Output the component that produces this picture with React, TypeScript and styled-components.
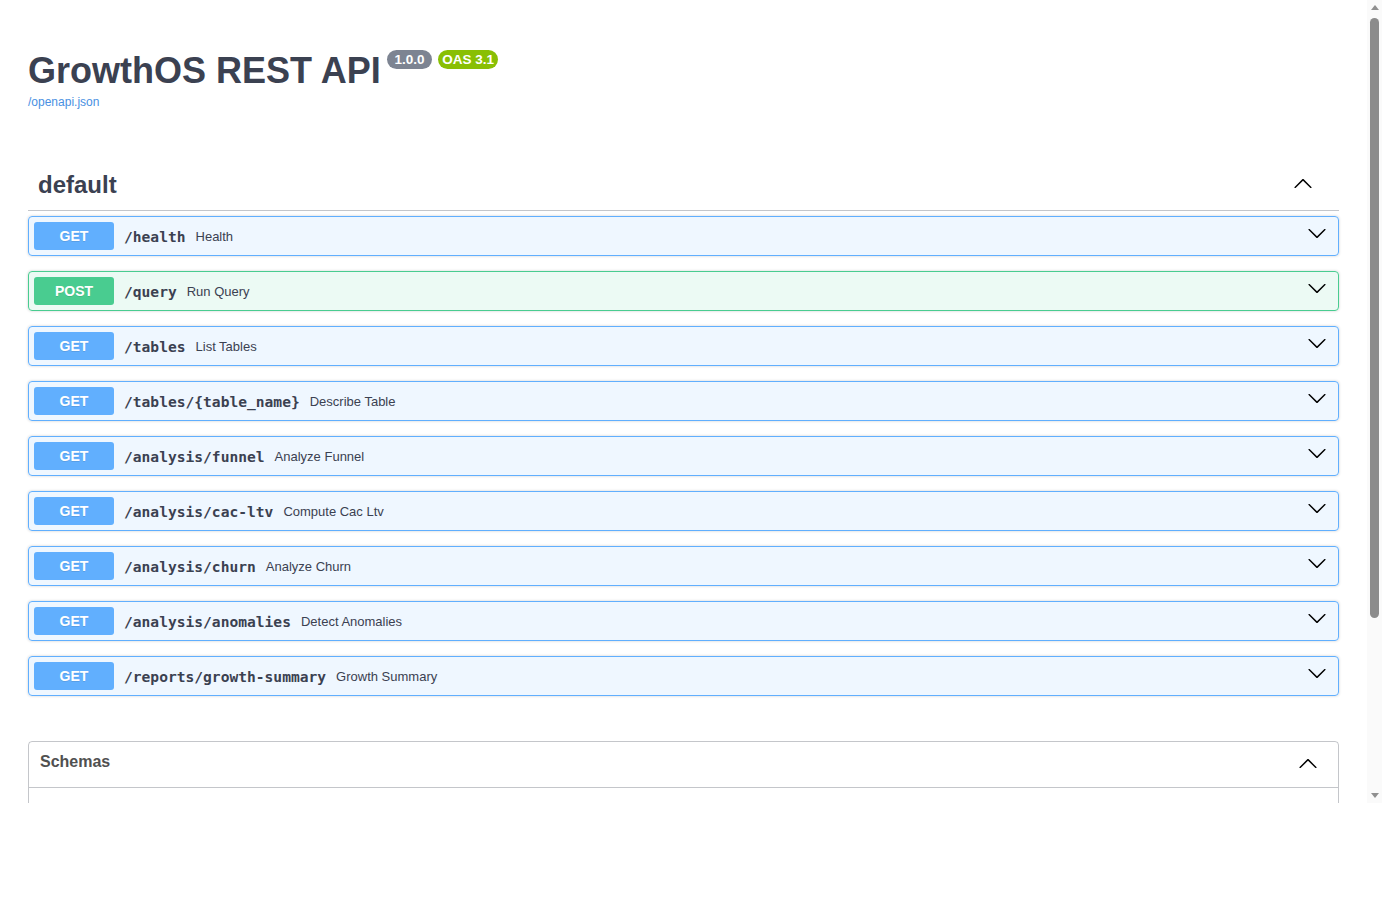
import { FunctionComponent } from 'react';
import styled, { createGlobalStyle } from 'styled-components';

const GlobalStyle = createGlobalStyle`
  html, body {
    margin: 0;
    padding: 0;
    background: #fff;
  }
  body {
    font-family: "Liberation Sans", Arial, sans-serif;
    color: #3b4151;
  }
`;

const Viewport = styled.div`
  display: flex;
  width: 1382px;
  height: 803px;
  background: #fff;
`;

const Page = styled.div`
  flex: 1;
  height: 100%;
  overflow: hidden;
`;

const ScrollTrack = styled.div`
  display: flex;
  flex-direction: column;
  align-items: center;
  width: 15px;
  height: 100%;
  background: #fafafa;
`;

const ScrollButton = styled.div`
  display: flex;
  align-items: center;
  justify-content: center;
  width: 15px;
  height: 15px;
  flex: none;
`;

const Triangle = styled.span<{ $up?: boolean }>`
  width: 0;
  height: 0;
  border-left: 4.5px solid transparent;
  border-right: 4.5px solid transparent;
  ${(p) => (p.$up ? 'border-bottom: 5px solid #8f8f8f;' : 'border-top: 5px solid #8f8f8f;')}
`;

const ScrollThumb = styled.div`
  width: 9px;
  height: 600px;
  margin-top: 3px;
  border-radius: 5px;
  background: #8c8c8c;
  flex: none;
`;

const ScrollSpacer = styled.div`
  flex: 1;
`;

const Wrapper = styled.div`
  padding: 50px 28px 38px;
`;

const Info = styled.div`
  margin: 0 0 50px;
`;

const Title = styled.h2`
  margin: 0 0 3px;
  font-size: 36px;
  font-weight: 700;
  line-height: 42px;
  color: #3b4151;
  display: flex;
  align-items: flex-start;
`;

const Badge = styled.small<{ $bg: string }>`
  display: inline-block;
  margin: 0 0 0 6px;
  padding: 2px 4px;
  border-radius: 57px;
  background: ${(p) => p.$bg};
  color: #fff;
  font-size: 13.5px;
  font-weight: 700;
  line-height: 15px;
  white-space: pre;
`;

const SpecLink = styled.a`
  display: block;
  font-size: 12px;
  line-height: 14px;
  color: #4990e2;
  text-decoration: none;
`;

const TagSection = styled.div`
  margin-bottom: 45px;
`;

const TagHeader = styled.h3`
  margin: 0 0 5px;
  padding: 12px 20px 11px 10px;
  display: flex;
  align-items: center;
  justify-content: space-between;
  border-bottom: 1px solid rgba(59, 65, 81, 0.3);
  font-size: 24px;
  font-weight: 700;
  line-height: 28px;
  color: #3b4151;
`;

const methodColors = {
  GET: { main: '#61affe', bg: 'rgba(97, 175, 254, 0.1)' },
  POST: { main: '#49cc90', bg: 'rgba(73, 204, 144, 0.1)' },
};

type Method = keyof typeof methodColors;

const OpBlock = styled.div<{ $method: Method }>`
  margin: 0 0 15px;
  border: 1px solid ${(p) => methodColors[p.$method].main};
  border-radius: 4px;
  background: ${(p) => methodColors[p.$method].bg};
  box-shadow: 0 0 3px rgba(0, 0, 0, 0.19);
  &:last-child {
    margin-bottom: 0;
  }
`;

const Summary = styled.div`
  display: flex;
  align-items: center;
  padding: 5px;
  height: 28px;
`;

const MethodLabel = styled.span<{ $method: Method }>`
  min-width: 80px;
  padding: 6px 0;
  border-radius: 3px;
  background: ${(p) => methodColors[p.$method].main};
  color: #fff;
  font-size: 14px;
  font-weight: 700;
  line-height: 16px;
  text-align: center;
  text-shadow: 0 1px 0 rgba(0, 0, 0, 0.1);
`;

const Path = styled.span`
  padding: 0 10px;
  font-family: "DejaVu Sans Mono", monospace;
  font-size: 14.6px;
  font-weight: 700;
  color: #3b4151;
  white-space: nowrap;
`;

const Description = styled.span`
  flex: 1;
  font-size: 13px;
  color: #3b4151;
`;

const ArrowBox = styled.span<{ $dy?: number }>`
  display: flex;
  width: 20px;
  height: 20px;
  margin-right: 6px;
  transform: translateY(${(p) => p.$dy ?? 0}px);
`;

const Models = styled.section`
  margin: 0 0 30px;
  border: 1px solid rgba(59, 65, 81, 0.3);
  border-radius: 4px;
`;

const ModelsHeader = styled.h4`
  margin: 0;
  padding: 7px 14px 13px 11px;
  height: 25px;
  display: flex;
  align-items: center;
  justify-content: space-between;
  border-bottom: 1px solid rgba(59, 65, 81, 0.3);
  font-size: 16px;
  font-weight: 700;
  color: #505050;
`;

const ModelList = styled.div`
  padding: 22px 0 5px;
`;

const ModelItem = styled.div`
  margin: 0 20px 15px;
  padding: 10px;
  border-radius: 4px;
  background: rgba(0, 0, 0, 0.05);
  font-family: "DejaVu Sans Mono", monospace;
  font-size: 13px;
  font-weight: 700;
  color: #3b4151;
`;

const ArrowDown: FunctionComponent = () => (
  <svg width="20" height="20" viewBox="0 0 20 20" fill="#000">
    <path d="M17.418 6.109c.272-.268.709-.268.979 0s.271.701 0 .969l-7.908 7.83c-.27.268-.707.268-.979 0l-7.908-7.83c-.27-.268-.27-.701 0-.969.271-.268.709-.268.979 0L10 13.25l7.418-7.141z" />
  </svg>
);

const ArrowUp: FunctionComponent = () => (
  <svg width="20" height="20" viewBox="0 0 20 20" fill="#000">
    <path d="M17.418 14.908c.272.268.709.268.979 0s.271-.701 0-.969l-7.908-7.83c-.27-.268-.707-.268-.979 0l-7.908 7.83c-.27.268-.27.701 0 .969.271.268.709.268.979 0L10 7.767l7.418 7.141z" />
  </svg>
);

type Operation = { method: Method; path: string; summary: string };

const operations: Operation[] = [
  { method: 'GET', path: '/health', summary: 'Health' },
  { method: 'POST', path: '/query', summary: 'Run Query' },
  { method: 'GET', path: '/tables', summary: 'List Tables' },
  { method: 'GET', path: '/tables/{table_name}', summary: 'Describe Table' },
  { method: 'GET', path: '/analysis/funnel', summary: 'Analyze Funnel' },
  { method: 'GET', path: '/analysis/cac-ltv', summary: 'Compute Cac Ltv' },
  { method: 'GET', path: '/analysis/churn', summary: 'Analyze Churn' },
  { method: 'GET', path: '/analysis/anomalies', summary: 'Detect Anomalies' },
  { method: 'GET', path: '/reports/growth-summary', summary: 'Growth Summary' },
];

const schemas = ['HTTPValidationError', 'QueryRequest', 'ValidationError', 'TableInfo'];

export default function App() {
  return (
    <>
      <GlobalStyle />
      <Viewport>
        <Page>
          <Wrapper>
            <Info>
              <Title>
                GrowthOS REST API
                <Badge $bg="#7d8492">{' 1.0.0 '}</Badge>
                <Badge $bg="#89bf04">OAS 3.1</Badge>
              </Title>
              <SpecLink href="#">/openapi.json</SpecLink>
            </Info>

            <TagSection>
              <TagHeader>
                <span>default</span>
                <ArrowBox $dy={-2}>
                  <ArrowUp />
                </ArrowBox>
              </TagHeader>
              {operations.map(({ method, path, summary }) => (
                <OpBlock $method={method} key={`${method}-${path}`}>
                  <Summary>
                    <MethodLabel $method={method}>{method}</MethodLabel>
                    <Path>{path}</Path>
                    <Description>{summary}</Description>
                    <ArrowBox $dy={-3}>
                      <ArrowDown />
                    </ArrowBox>
                  </Summary>
                </OpBlock>
              ))}
            </TagSection>

            <Models>
              <ModelsHeader>
                <span>Schemas</span>
                <ArrowBox $dy={1}>
                  <ArrowUp />
                </ArrowBox>
              </ModelsHeader>
              <ModelList>
                {schemas.map((name) => (
                  <ModelItem key={name}>{name}</ModelItem>
                ))}
              </ModelList>
            </Models>
          </Wrapper>
        </Page>
        <ScrollTrack>
          <ScrollButton>
            <Triangle $up />
          </ScrollButton>
          <ScrollThumb />
          <ScrollSpacer />
          <ScrollButton>
            <Triangle />
          </ScrollButton>
        </ScrollTrack>
      </Viewport>
    </>
  );
}
